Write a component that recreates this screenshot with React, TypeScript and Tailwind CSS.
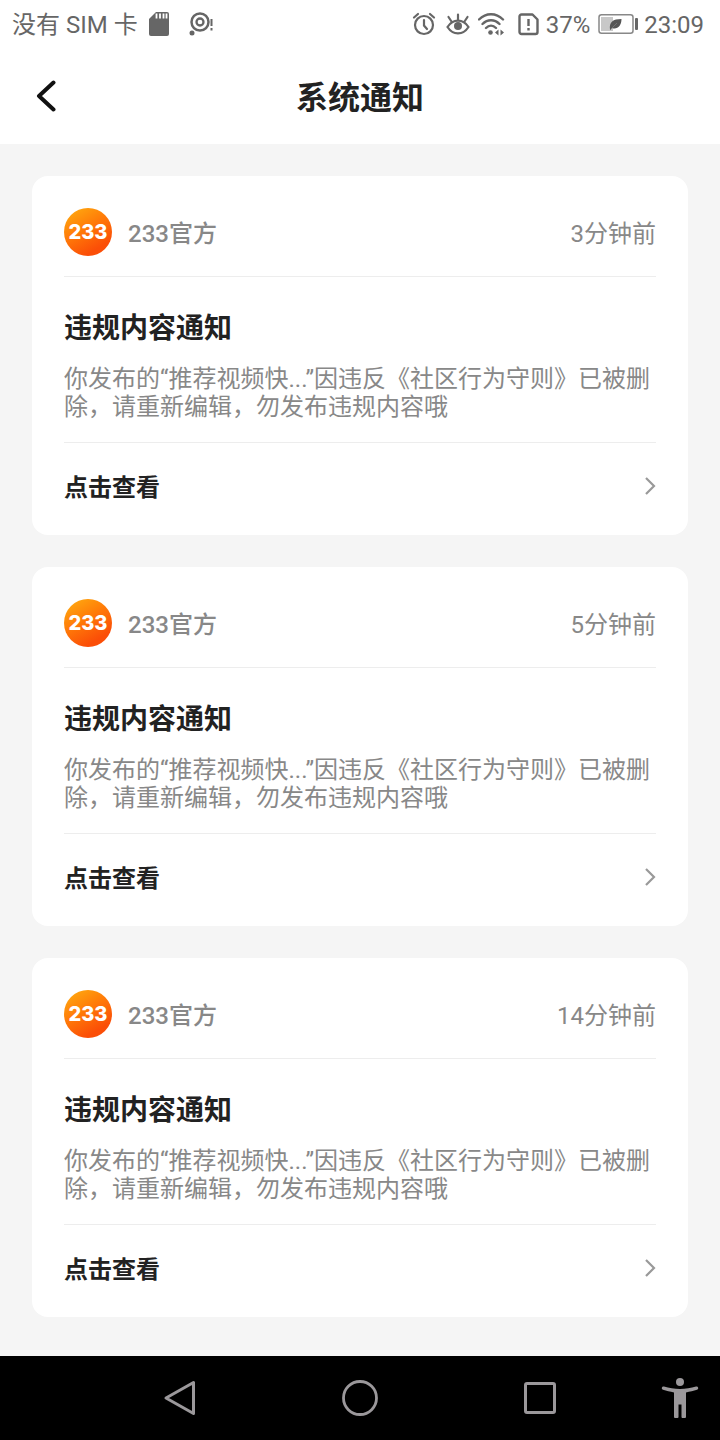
import { useId } from 'react';

type Notice = {
  id: number;
  time: string;
};

const notices: Notice[] = [
  { id: 1, time: '3分钟前' },
  { id: 2, time: '5分钟前' },
  { id: 3, time: '14分钟前' },
];

function StatusBar() {
  return (
    <div className="flex h-12 items-center justify-between pl-3 pr-4 text-2xl text-[#666]">
      <div className="flex items-center">
        <span className="pt-0.5">没有 SIM 卡</span>
        <svg className="ml-2.5 h-7 w-[22px]" viewBox="0 0 22 28" fill="#666">
          <path d="M8 2h11a2 2 0 0 1 2 2v20a2 2 0 0 1-2 2H3a2 2 0 0 1-2-2V9z" />
          <path d="M8.500 3.500v5M12 3.500v5M15.500 3.500v5M18.500 3.500v5" stroke="#fff" strokeWidth="1.800" />
        </svg>
        <svg className="ml-4 h-7 w-7" viewBox="0 0 28 28" fill="none" stroke="#666">
          <circle cx="14" cy="12" r="8.500" strokeWidth="2.500" />
          <circle cx="14" cy="12" r="3.500" strokeWidth="2.300" />
          <circle cx="6" cy="23" r="2.500" fill="#666" stroke="none" />
          <path d="M25.500 9v7M25.500 18v2.500" strokeWidth="2" />
        </svg>
      </div>
      <div className="flex items-center">
        <svg className="h-7 w-6" viewBox="0 0 24 28" fill="none" stroke="#666" strokeWidth="2.200" strokeLinecap="round">
          <circle cx="12" cy="15" r="9" />
          <path d="M12 10v5.500l3 3.500M2 7.500 6 4M22 7.500 18 4" />
        </svg>
        <svg className="ml-2.5 h-7 w-6" viewBox="0 0 24 28" fill="none" stroke="#666" strokeWidth="2.200" strokeLinecap="round">
          <path d="M1.500 17C7 8.500 17 8.500 22.500 17 17 25.500 7 25.500 1.500 17z" />
          <circle cx="12" cy="16" r="4" fill="#666" stroke="none" />
          <path d="M12 4.500V10M2.500 7l3 4.500M21.500 7l-3 4.500" />
        </svg>
        <svg className="ml-2 h-7 w-7" viewBox="0 0 28 28" fill="none" stroke="#666" strokeWidth="2.400" strokeLinecap="round">
          <path d="M1 9.500c7-7 17-7 24 0M4.500 14c5-5 12-5 17 0M8 18c3-3 7-3 10 0" />
          <circle cx="12.500" cy="22.500" r="2.300" fill="#666" stroke="none" />
          <path d="m20.500 19.500-3.500 3 3.500 3zM22.500 19.500l3.500 3-3.500 3z" fill="#666" stroke="none" />
        </svg>
        <svg className="ml-3 h-7 w-[22px]" viewBox="0 0 22 28" fill="none" stroke="#666" strokeWidth="2.400" strokeLinejoin="round">
          <path d="M3.500 4.500h11l5 5V22a2 2 0 0 1-2 2h-14a2 2 0 0 1-2-2V6.500a2 2 0 0 1 2-2z" />
          <path d="M10.500 9v7M10.500 18v2.500" />
        </svg>
        <span className="ml-1.5 pt-0.5">37%</span>
        <svg className="ml-2 h-7 w-10" viewBox="0 0 40 28" fill="none">
          <rect x="1" y="4.700" width="34" height="18.500" rx="2.500" stroke="#888" strokeWidth="1.500" />
          <rect x="3" y="7" width="12" height="14" fill="#c8c8c8" />
          <path d="M12 19.500C11 12 15 9 23.500 9 23.500 16 19 20 14 18l-1.500 2z" fill="#555" />
          <path d="M13 19l6-6" stroke="#888" strokeWidth="0.600" />
          <rect x="37" y="8" width="3" height="12" rx="1" fill="#666" />
        </svg>
        <span className="ml-1.5 pt-0.5">23:09</span>
      </div>
    </div>
  );
}

function Logo() {
  const gradientId = useId();

  return (
    <svg className="h-12 w-12" viewBox="0 0 48 48" role="img" aria-label="233">
      <defs>
        <linearGradient id={gradientId} x1="0.100" y1="0.050" x2="0.600" y2="0.900">
          <stop offset="0" stopColor="#ffa80f" />
          <stop offset="0.500" stopColor="#ff7a08" />
          <stop offset="1" stopColor="#fb4e07" />
        </linearGradient>
      </defs>
      <circle cx="24" cy="24" r="24" fill={`url(#${gradientId})`} />
      <text
        x="24"
        y="31"
        textAnchor="middle"
        fill="#fff"
        className="font-[Inter,sans-serif] text-[20px] font-extrabold"
      >
        233
      </text>
    </svg>
  );
}

function NoticeCard({ notice }: { notice: Notice }) {
  return (
    <article className="rounded-2xl bg-white px-8 pt-8">
      <div className="flex items-center border-b border-[#ededed] pb-5">
        <Logo />
        <span className="ml-4 pt-1 text-2xl font-medium text-[#888]">233官方</span>
        <time className="ml-auto pt-1 text-2xl text-[#888]">{notice.time}</time>
      </div>
      <h2 className="mt-8 text-[28px] leading-10 font-bold text-[#222]">违规内容通知</h2>
      <p className="mt-4 border-b border-[#ededed] pb-[21px] text-2xl leading-7 text-[#888]">
        你发布的“推荐视频快...”因违反《社区行为守则》已被删除，请重新编辑，勿发布违规内容哦
      </p>
      <a href="#" className="flex h-[92px] items-center justify-between pb-0.5 text-2xl font-bold text-[#222]">
        点击查看
        <svg className="mb-1 h-5 w-3" viewBox="0 0 12 20" fill="none" stroke="#999" strokeWidth="2.200">
          <path d="m2 2 8 8-8 8" />
        </svg>
      </a>
    </article>
  );
}

function NavBar() {
  return (
    <nav className="grid h-[84px] grid-cols-8 bg-black text-[#9b989b]">
      <button type="button" aria-label="返回" className="col-span-2 col-start-2 flex items-center justify-center">
        <svg className="h-10 w-10" viewBox="0 0 40 40" fill="none" stroke="currentColor" strokeWidth="3" strokeLinejoin="round">
          <path d="M33.500 4.500v31L6 20z" />
        </svg>
      </button>
      <button type="button" aria-label="主页" className="col-span-2 flex items-center justify-center">
        <svg className="h-10 w-10" viewBox="0 0 40 40" fill="none" stroke="currentColor" strokeWidth="2.800">
          <circle cx="20" cy="20" r="16.500" />
        </svg>
      </button>
      <button type="button" aria-label="最近任务" className="col-span-2 flex items-center justify-center">
        <svg className="h-10 w-10" viewBox="0 0 40 40" fill="none" stroke="currentColor" strokeWidth="3">
          <rect x="5.500" y="5.500" width="29" height="29" rx="1.500" />
        </svg>
      </button>
      <button type="button" aria-label="无障碍" className="flex items-center justify-end pr-5">
        <svg className="h-10 w-10" viewBox="0 0 40 40" fill="currentColor">
          <circle cx="20" cy="4" r="4" />
          <path d="M4 8.500c10 3.200 22 3.200 32 0a1.700 1.700 0 0 1 1 3.300c-3.500 1.200-7 2-11 2.600V39a1 1 0 0 1-1 1h-2.500a1 1 0 0 1-1-1V26.500h-3V39a1 1 0 0 1-1 1H15a1 1 0 0 1-1-1V14.400c-4-.6-7.500-1.400-11-2.600a1.700 1.700 0 0 1 1-3.300z" />
        </svg>
      </button>
    </nav>
  );
}

export default function App() {
  return (
    <div className="flex min-h-screen flex-col bg-[#f5f5f5] font-[Roboto,'Noto_Sans_CJK_SC',sans-serif]">
      <header className="bg-white">
        <StatusBar />
        <div className="grid h-24 grid-cols-[1fr_auto_1fr] items-center px-8">
          <button type="button" aria-label="返回" className="justify-self-start">
            <svg className="h-8 w-7" viewBox="0 0 28 32" fill="none" stroke="#111" strokeWidth="4" strokeLinecap="round" strokeLinejoin="round">
              <path d="M21.500 2.500 7 16l14.500 13.500" />
            </svg>
          </button>
          <h1 className="pt-1 text-[32px] leading-10 font-bold text-[#222]">系统通知</h1>
        </div>
      </header>
      <main className="flex flex-1 flex-col gap-8 p-8">
        {notices.map((notice) => (
          <NoticeCard key={notice.id} notice={notice} />
        ))}
      </main>
      <NavBar />
    </div>
  );
}
